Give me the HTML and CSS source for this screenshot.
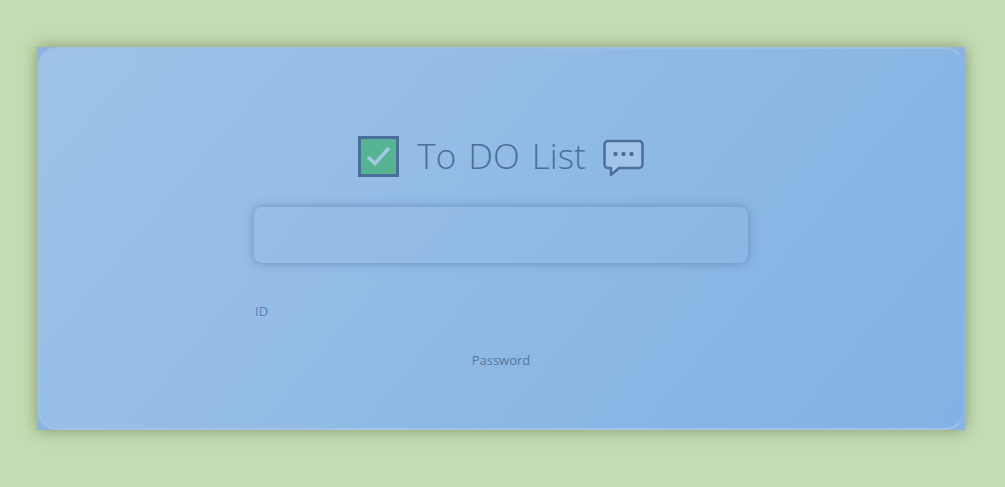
FILE: index.html
```html
<!DOCTYPE html>
<html lang="en">
<head>
    <meta charset="UTF-8">
    <meta name="viewport" content="width=device-width, initial-scale=1.0">
    <title>To DO List</title>
    <link rel="stylesheet" href="styles.css">
</head>
<body>
    <div class="frame">
        <div class="container">
            <h1 class="title">
                <svg class="check" width="41" height="42" viewBox="0 0 41 42">
                    <rect x="1.500" y="2.500" width="38" height="38" fill="#56b393" stroke="#4a6f9b" stroke-width="3"/>
                    <path d="M10 22l7 6.500L31 13" fill="none" stroke="#a3c9e6" stroke-width="3.500"/>
                </svg>
                <span>To DO List</span>
                <svg class="chat" width="41" height="38" viewBox="0 0 41 38">
                    <path d="M5 2h31a3.500 3.500 0 0 1 3.500 3.500v20a3.500 3.500 0 0 1-3.500 3.500H16l-8 7v-7H5a3.500 3.500 0 0 1-3.500-3.500v-20A3.500 3.500 0 0 1 5 2z" fill="#a3c4ea" stroke="#4a6f9b" stroke-width="2.500" stroke-linejoin="round"/>
                    <circle cx="12.500" cy="15" r="2.200" fill="#4a6f9b"/>
                    <circle cx="20.500" cy="15" r="2.200" fill="#4a6f9b"/>
                    <circle cx="28.500" cy="15" r="2.200" fill="#4a6f9b"/>
                </svg>
            </h1>
            <div class="form">
                <input class="task-input" type="text" name="task">
                <div class="id-label">ID</div>
                <div class="password-label">Password</div>
            </div>
        </div>
    </div>
</body>
</html>
```

FILE: styles.css
```css
html, body {
    height: 100%;
}
body {
    margin: 0;
    padding: 47px 40px 57px 37px;
    box-sizing: border-box;
    background: #c4dcb4;
    font-family: "Open Sans", "Noto Sans", sans-serif;
    overflow: hidden;
}
.frame {
    height: 383px;
    background: #8fb3e0;
    box-shadow: 0 0 14px rgba(90, 110, 70, 0.65);
}
.container {
    height: 100%;
    box-sizing: border-box;
    border: 2px solid;
    border-color: #9dbfe6 #8db6e5 #a2c2e6 #9dbfe6;
    border-radius: 20px;
    background: linear-gradient(130deg, #9fc3e8 0%, #90bae6 50%, #82b1e3 100%);
    padding-top: 85px;
}
.title {
    display: flex;
    justify-content: center;
    align-items: center;
    margin: 0;
    height: 44px;
    font-size: 35px;
    font-weight: 300;
    color: #4a6f9b;
}
.title span {
    margin: 0 17px 2px 18px;
    word-spacing: 3px;
}
.chat {
    margin-top: 4px;
}
.form {
    width: 494px;
    margin: 29px auto 0;
}
.task-input {
    display: block;
    width: 100%;
    height: 56px;
    box-sizing: border-box;
    border: none;
    border-radius: 8px;
    background: rgba(255, 255, 255, 0.01);
    box-shadow: 0 0 10px rgba(70, 105, 150, 0.55);
}
.id-label {
    margin: 39px 0 0 1px;
    font-size: 13px;
    line-height: 18px;
    color: #5a7fb5;
}
.password-label {
    margin-top: 31px;
    font-size: 13px;
    line-height: 18px;
    text-align: center;
    color: #55779f;
}
```
